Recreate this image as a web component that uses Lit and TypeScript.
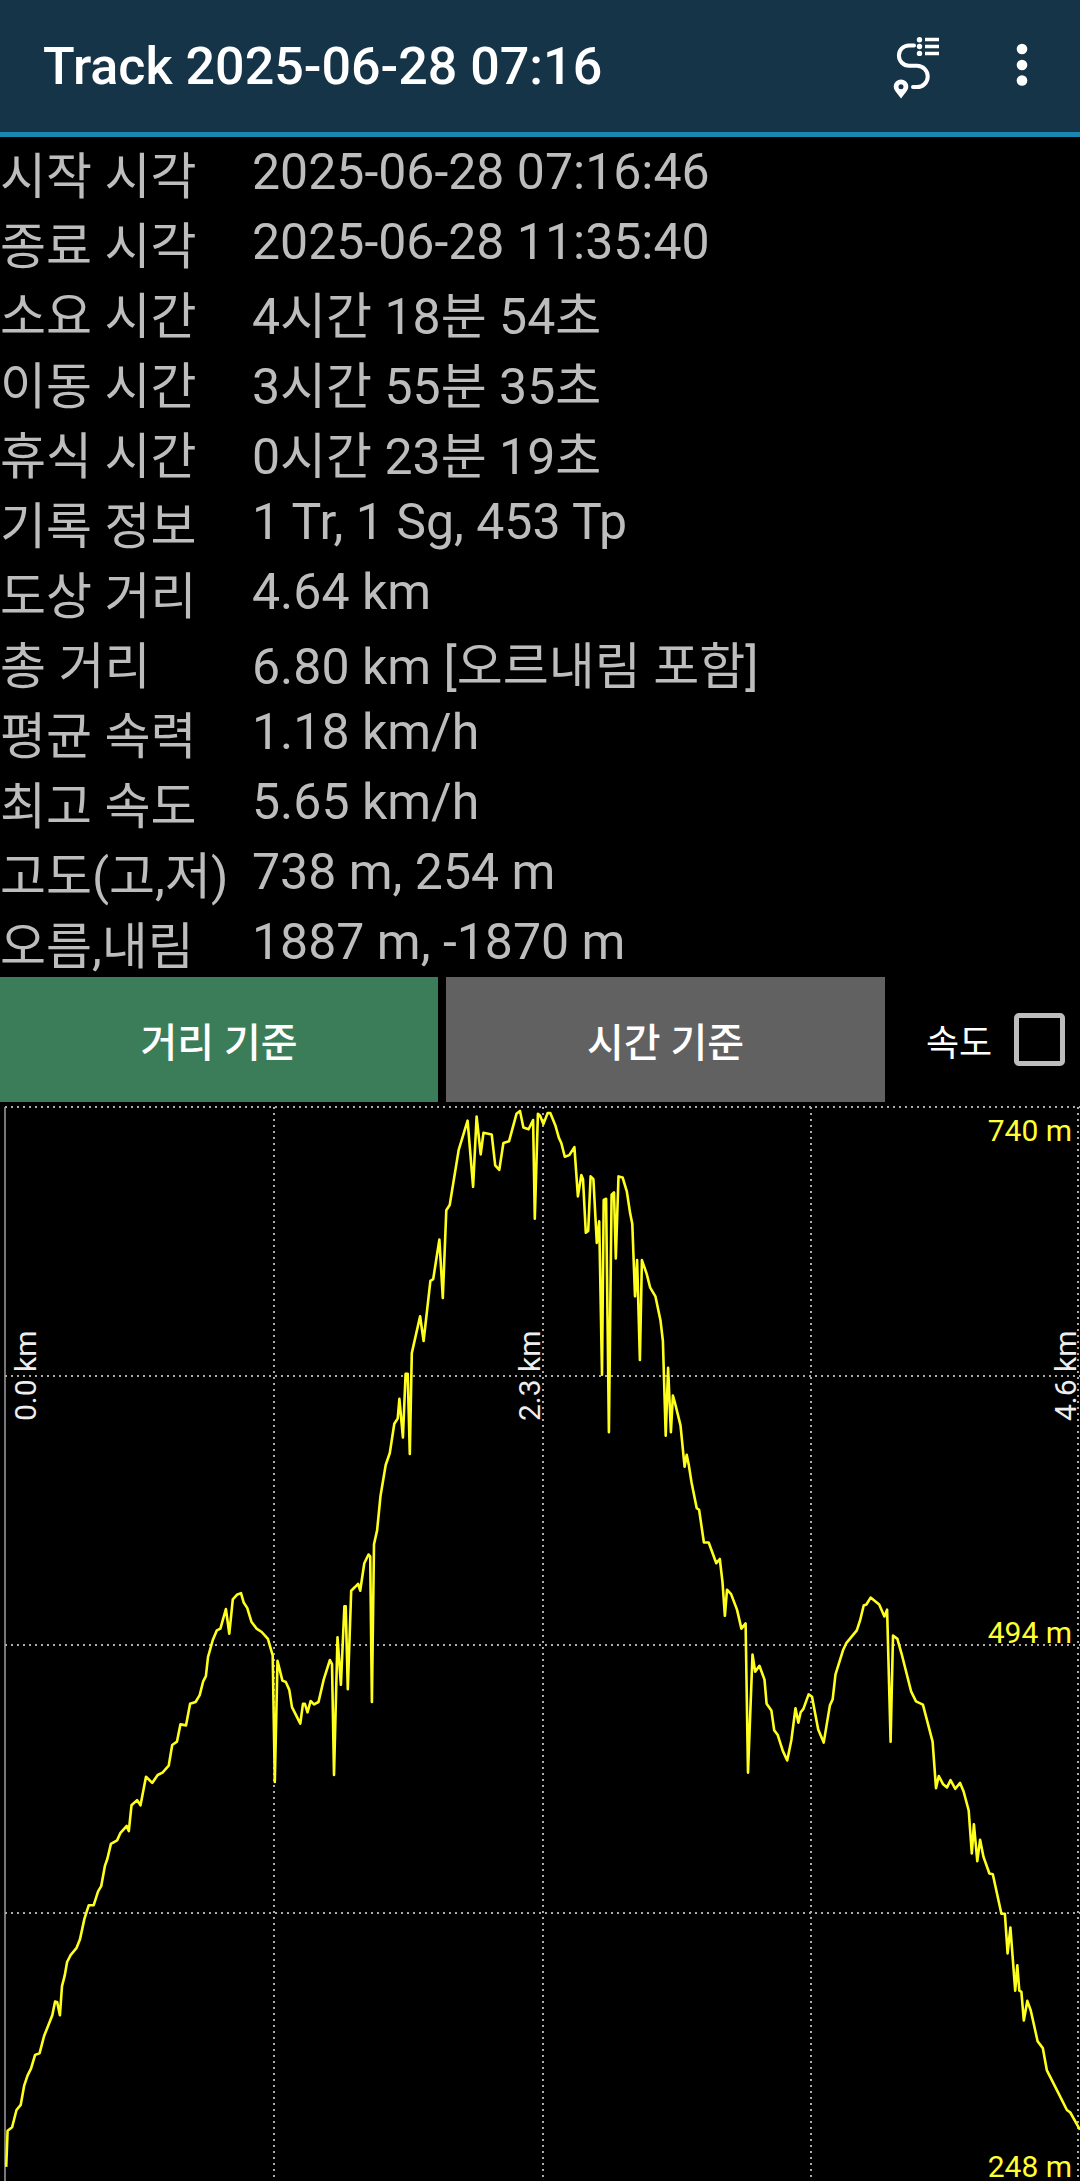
import { LitElement, html, css, svg } from 'lit';
import { customElement } from 'lit/decorators.js';

const ROWS: Array<[string, string]> = [
  ['시작 시각', '2025-06-28 07:16:46'],
  ['종료 시각', '2025-06-28 11:35:40'],
  ['소요 시간', '4시간 18분 54초'],
  ['이동 시간', '3시간 55분 35초'],
  ['휴식 시간', '0시간 23분 19초'],
  ['기록 정보', '1 Tr, 1 Sg, 453 Tp'],
  ['도상 거리', '4.64 km'],
  ['총 거리', '6.80 km [오르내림 포함]'],
  ['평균 속력', '1.18 km/h'],
  ['최고 속도', '5.65 km/h'],
  ['고도(고,저)', '738 m, 254 m'],
  ['오름,내림', '1887 m, -1870 m'],
];

const CHART_TOP = 1102;
const CHART_H = 1079;

// elevation profile, traced in screen coords of four quadrants (scale 2.904)
const TRACE: Array<[number, number, number[]]> = [
  [0, 1640, [18,1530, 22,1425, 35,1415, 48,1365, 60,1350, 70,1295, 80,1265, 90,1245, 102,1205, 115,1200, 128,1150, 152,1090, 160,1050, 166,1052, 174,1090, 180,1005, 188,975, 195,935, 205,915, 222,895, 232,870, 245,810, 258,770, 272,770, 285,730, 294,715, 305,655, 312,635, 322,592, 340,582, 350,560, 368,540, 374,555, 382,480, 398,465, 408,480, 424,397, 442,415, 458,392, 472,385, 490,365, 500,305, 514,295, 524,245, 540,248, 552,185, 568,180, 580,160, 590,120, 598,105, 604,50, 618,0]],
  [0, 1100, [630,1540, 640,1535, 656,1478, 666,1550, 676,1450, 688,1437, 700,1432, 708,1460, 718,1475, 730,1515, 745,1535, 760,1545, 778,1565]],
  [0, 1640, [792,45, 798,412, 806,60, 820,118, 830,122, 840,145, 848,195, 872,243, 880,185, 885,185, 893,210, 902,177, 912,187, 925,180, 940,115, 958,58, 964,70, 970,392]],
  [0, 1100, [980,1560]],
  [0, 1640, [990,130]],
  [0, 1100, [1000,1470, 1004,1470]],
  [0, 1640, [1010,143]],
  [0, 1100, [1020,1425, 1030,1415, 1040,1405, 1046,1425, 1058,1345, 1070,1320, 1075,1325]],
  [0, 1640, [1080,180]],
  [0, 1100, [1086,1290, 1095,1250, 1105,1150, 1120,1060, 1132,1025, 1145,940, 1155,925, 1160,868, 1170,980, 1178,795, 1184,795, 1190,1028, 1196,735, 1220,628, 1230,700, 1250,525, 1258,520, 1276,405, 1286,575, 1296,320, 1306,305, 1332,145, 1358,60, 1374,252, 1384,48, 1396,158, 1404,95, 1428,100, 1438,190, 1450,203, 1462,125, 1478,120, 1500,40, 1510,32, 1520,80, 1535,85, 1548,58, 1553,345, 1562,40]],
  [540, 1100, [0,45, 10,70, 22,38, 30,38, 45,75, 55,110, 62,125, 72,165, 85,160, 100,137, 110,280, 120,218, 125,230, 133,385, 140,380, 147,222, 155,230, 165,415, 172,352, 180,798, 185,290, 192,287, 200,965, 208,275, 215,268, 220,460, 228,222, 240,225, 252,265, 262,330, 268,360, 276,570, 282,465, 290,755, 296,465, 310,505, 320,545, 335,570, 350,640, 357,700, 365,975, 372,778, 380,965, 386,858, 392,880, 408,945, 420,1065, 426,1030, 432,1060, 440,1110, 455,1185, 462,1190, 476,1285, 490,1285, 512,1345, 522,1333, 530,1400, 537,1498, 543,1422, 555,1435, 572,1480, 585,1535, 597,1520]],
  [540, 1640, [604,385, 617,42, 625,92, 637,75, 652,115, 658,185, 672,205, 680,262, 690,275, 705,322, 718,350, 730,290, 742,198, 750,240, 757,210, 765,200, 780,158, 790,165, 808,260, 824,298, 842,190, 850,172, 858,100, 880,30, 890,8]],
  [540, 1100, [920,1540, 930,1510, 940,1468, 948,1465, 960,1445, 985,1465, 1000,1500, 1008,1480]],
  [540, 1640, [1018,295]],
  [540, 1100, [1025,1555, 1038,1565]],
  [540, 1640, [1050,40, 1078,150, 1092,178, 1112,188, 1140,295, 1150,430, 1158,395, 1170,418, 1182,428, 1192,407, 1206,432, 1220,415, 1230,440, 1245,495, 1254,620, 1260,535, 1270,642, 1278,580, 1288,630, 1305,678, 1315,680, 1340,795, 1350,795, 1358,910, 1366,835, 1380,1018, 1386,945, 1392,1018, 1398,1022, 1405,1105, 1415,1048, 1425,1075, 1445,1165, 1460,1185, 1472,1250, 1505,1315, 1530,1365, 1540,1372, 1568,1422]],
];

function profilePoints(): string {
  const out: string[] = [];
  for (const [ox, oy, pts] of TRACE) {
    for (let i = 0; i < pts.length; i += 2) {
      const x = ox + pts[i] / 2.904;
      const y = oy + pts[i + 1] / 2.904 - CHART_TOP;
      out.push(`${x.toFixed(1)},${y.toFixed(1)}`);
    }
  }
  return out.join(' ');
}

const H_LINES = [5, 274, 543, 811, 1078];
const V_LINES = [274, 543, 811, 1078];

@customElement('app-root')
export class AppRoot extends LitElement {
  static override styles = css`
    :host {
      display: block;
      width: 1080px;
      height: 2181px;
      background: #000;
      overflow: hidden;
      font-family: Roboto, "Noto Sans CJK KR", sans-serif;
    }
    .header {
      height: 132px;
      background: #163447;
      border-bottom: 5px solid #1a87b3;
      display: flex;
      align-items: center;
      padding-left: 43px;
    }
    .title {
      flex: 1;
      color: #fff;
      font-size: 52px;
      font-weight: 500;
      white-space: nowrap;
    }
    .route-icon {
      width: 50px;
      height: 66px;
      margin-top: 2px;
      margin-right: 72px;
    }
    .more-icon {
      width: 16px;
      height: 48px;
      margin-right: 50px;
    }
    .info {
      display: grid;
      grid-template-columns: 252px 1fr;
      grid-auto-rows: 70px;
      align-items: center;
      color: #bdbdbd;
      font-size: 50px;
      white-space: nowrap;
    }
    .val {
      font-size: 50px;
    }
    .controls {
      height: 125px;
      display: flex;
      align-items: stretch;
      color: #fff;
    }
    .btn {
      width: 438px;
      display: flex;
      align-items: center;
      justify-content: center;
      font-size: 40px;
      font-weight: 500;
    }
    .btn.dist {
      background: #3c7d59;
    }
    .btn.time {
      width: 439px;
      margin-left: 8px;
      background: #616161;
    }
    .speed {
      margin-left: 41px;
      display: flex;
      align-items: center;
      font-size: 36px;
    }
    .check {
      width: 41px;
      height: 43px;
      margin-left: 22px;
      border: 5px solid #bdbdbd;
      border-radius: 5px;
      box-sizing: content-box;
    }
    .chart {
      display: block;
      width: 1080px;
      height: 1079px;
    }
    .chart text {
      font-family: Roboto, sans-serif;
      font-size: 30px;
    }
  `;

  private renderChart() {
    return svg`
      <line x1="5" y1="5" x2="5" y2="${CHART_H}" stroke="#777" stroke-width="2"></line>
      ${H_LINES.slice(0, 4).map((y, i) => {
        const ys = [5, 274, 543, 811];
        return svg`<line x1="5" y1="${ys[i]}" x2="1080" y2="${ys[i]}" stroke="#aaa" stroke-width="2" stroke-dasharray="2 4"></line>`;
      })}
      ${V_LINES.map(x => svg`<line x1="${x}" y1="5" x2="${x}" y2="${CHART_H}" stroke="#aaa" stroke-width="2" stroke-dasharray="2 4"></line>`)}
      <polyline points="${profilePoints()}" fill="none" stroke="#ffff1e" stroke-width="2.6" stroke-linejoin="round"></polyline>
      <text x="1072" y="39" text-anchor="end" fill="#ffff33">740 m</text>
      <text x="1072" y="541" text-anchor="end" fill="#ffff33">494 m</text>
      <text x="1072" y="1075" text-anchor="end" fill="#ffff33">248 m</text>
      <text transform="translate(36 319) rotate(-90)" fill="#eee">0.0 km</text>
      <text transform="translate(540 319) rotate(-90)" fill="#eee">2.3 km</text>
      <text transform="translate(1076 319) rotate(-90)" fill="#eee">4.6 km</text>
    `;
  }

  protected override render() {
    return html`
      <div class="header">
        <div class="title">Track 2025-06-28 07:16</div>
        <svg class="route-icon" viewBox="0 0 50 66" fill="none">
          <path d="M22 11.5H17a10.1 10.1 0 0 0 0 20.2h8a10.7 10.7 0 0 1 0 21.4H21" stroke="#fff" stroke-width="4" stroke-linecap="round"></path>
          <path fill="#fff" fill-rule="evenodd" d="M9 64.5L3.6 57.6A7.3 7.3 0 1 1 14.4 57.6ZM9 50.2a2.5 2.5 0 1 0 0 5a2.5 2.5 0 1 0 0-5Z"></path>
          <circle cx="27.5" cy="5.7" r="2.7" fill="#fff"></circle>
          <circle cx="27.5" cy="12.5" r="2.7" fill="#fff"></circle>
          <circle cx="27.5" cy="19.4" r="2.7" fill="#fff"></circle>
          <path d="M33 5.5H47M33 12.5H47M33 19.5H47" stroke="#fff" stroke-width="3.4"></path>
        </svg>
        <svg class="more-icon" viewBox="0 0 16 48">
          <circle cx="8" cy="7" r="5.3" fill="#fff"></circle>
          <circle cx="8" cy="23" r="5.3" fill="#fff"></circle>
          <circle cx="8" cy="38.5" r="5.3" fill="#fff"></circle>
        </svg>
      </div>
      <div class="info">
        ${ROWS.map(([k, v]) => html`<div>${k}</div><div class="val">${v}</div>`)}
      </div>
      <div class="controls">
        <div class="btn dist">거리 기준</div>
        <div class="btn time">시간 기준</div>
        <div class="speed">속도<div class="check"></div></div>
      </div>
      <svg class="chart" viewBox="0 0 1080 1079">${this.renderChart()}</svg>
    `;
  }
}
